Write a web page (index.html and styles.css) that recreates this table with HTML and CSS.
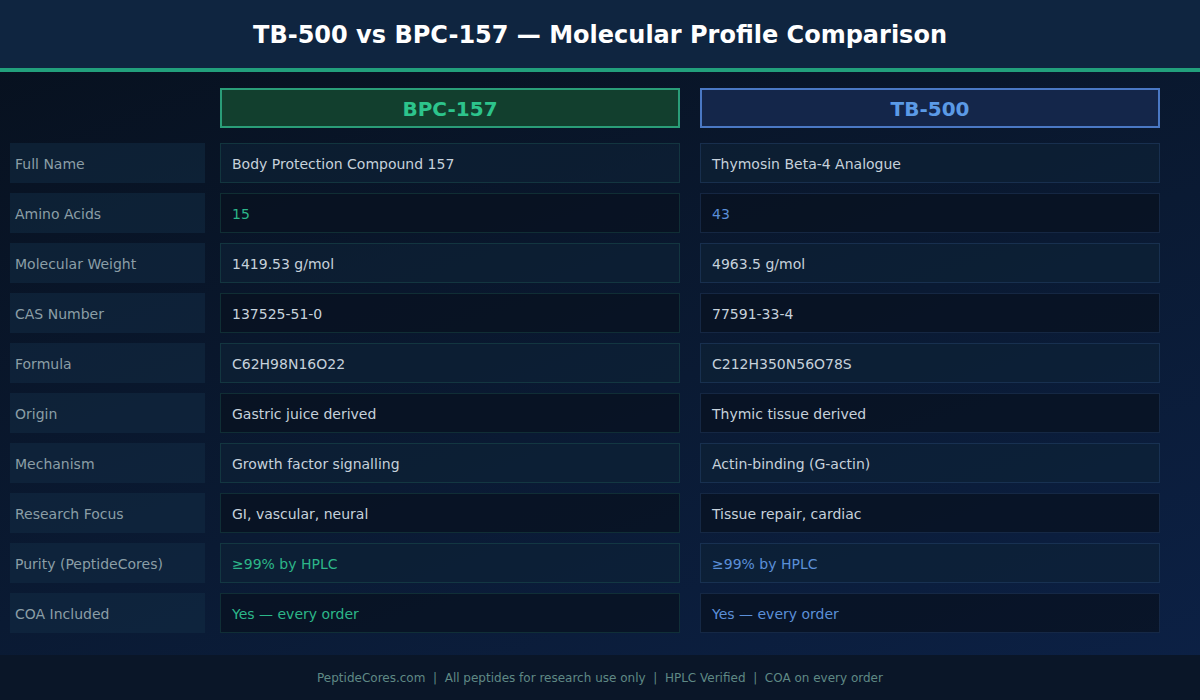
FILE: index.html
```html
<!DOCTYPE html>
<html>
<head>
<meta charset="utf-8">
<link rel="stylesheet" href="styles.css">
</head>
<body>
<div class="page">
  <header class="top">
    <h1 class="title">TB-500 vs BPC-157 — Molecular Profile Comparison</h1>
  </header>
  <div class="accent"></div>
  <main class="main">
    <div class="row head-row">
      <div class="label-spacer"></div>
      <div class="col-head bpc-head">BPC-157</div>
      <div class="col-head tb-head">TB-500</div>
    </div>
    <div class="row alt">
      <div class="label">Full Name</div>
      <div class="cell bpc">Body Protection Compound 157</div>
      <div class="cell tb">Thymosin Beta-4 Analogue</div>
    </div>
    <div class="row">
      <div class="label">Amino Acids</div>
      <div class="cell bpc green">15</div>
      <div class="cell tb blue">43</div>
    </div>
    <div class="row alt">
      <div class="label">Molecular Weight</div>
      <div class="cell bpc">1419.53 g/mol</div>
      <div class="cell tb">4963.5 g/mol</div>
    </div>
    <div class="row">
      <div class="label">CAS Number</div>
      <div class="cell bpc">137525-51-0</div>
      <div class="cell tb">77591-33-4</div>
    </div>
    <div class="row alt">
      <div class="label">Formula</div>
      <div class="cell bpc">C62H98N16O22</div>
      <div class="cell tb">C212H350N56O78S</div>
    </div>
    <div class="row">
      <div class="label">Origin</div>
      <div class="cell bpc">Gastric juice derived</div>
      <div class="cell tb">Thymic tissue derived</div>
    </div>
    <div class="row alt">
      <div class="label">Mechanism</div>
      <div class="cell bpc">Growth factor signalling</div>
      <div class="cell tb">Actin-binding (G-actin)</div>
    </div>
    <div class="row">
      <div class="label">Research Focus</div>
      <div class="cell bpc">GI, vascular, neural</div>
      <div class="cell tb">Tissue repair, cardiac</div>
    </div>
    <div class="row alt">
      <div class="label">Purity (PeptideCores)</div>
      <div class="cell bpc green">≥99% by HPLC</div>
      <div class="cell tb blue">≥99% by HPLC</div>
    </div>
    <div class="row">
      <div class="label">COA Included</div>
      <div class="cell bpc green">Yes — every order</div>
      <div class="cell tb blue">Yes — every order</div>
    </div>
  </main>
  <footer class="foot">PeptideCores.com&nbsp;&nbsp;|&nbsp;&nbsp;All peptides for research use only&nbsp;&nbsp;|&nbsp;&nbsp;HPLC Verified&nbsp;&nbsp;|&nbsp;&nbsp;COA on every order</footer>
</div>
</body>
</html>
```

FILE: styles.css
```css
* { box-sizing: border-box; }
html, body { margin: 0; padding: 0; }
body {
  width: 1200px;
  height: 700px;
  overflow: hidden;
  font-family: "DejaVu Sans", sans-serif;
  background: #08111f;
}
.page {
  width: 1200px;
  height: 700px;
  display: flex;
  flex-direction: column;
  background: linear-gradient(160deg, #07101d 0%, #0a1a33 55%, #0c2146 100%);
}
.top {
  height: 68px;
  background: #0f2540;
  display: flex;
  align-items: center;
  justify-content: center;
  padding-top: 2px;
}
.title {
  margin: 0;
  color: #ffffff;
  font-size: 24px;
  font-weight: bold;
}
.accent {
  height: 4px;
  background: #22a07c;
}
.main {
  flex: 1;
  padding: 16px 0 0 10px;
  display: flex;
  flex-direction: column;
  gap: 10px;
}
.row {
  display: flex;
  height: 40px;
}
.head-row {
  margin-bottom: 5px;
}
.label-spacer {
  width: 195px;
  margin-right: 15px;
}
.label {
  width: 195px;
  margin-right: 15px;
  background: rgba(18, 44, 68, 0.55);
  color: #8b9ea6;
  font-size: 14px;
  display: flex;
  align-items: center;
  padding: 2px 0 0 5px;
}
.col-head {
  width: 460px;
  display: flex;
  align-items: center;
  justify-content: center;
  font-size: 20px;
  font-weight: bold;
  padding-top: 2px;
}
.bpc-head {
  margin-right: 20px;
  background: #123f2e;
  border: 2px solid #2a9d78;
  color: #2dc48c;
}
.tb-head {
  background: #14264a;
  border: 2px solid #4a78c4;
  color: #5b9ae6;
}
.cell {
  width: 460px;
  display: flex;
  align-items: center;
  padding: 2px 0 0 11px;
  font-size: 14px;
  color: #c6d1db;
  background: rgba(8, 17, 32, 0.75);
}
.row.alt .cell {
  background: rgba(14, 34, 54, 0.65);
}
.cell.bpc {
  margin-right: 20px;
  border: 1px solid rgba(40, 120, 100, 0.28);
}
.cell.tb {
  border: 1px solid rgba(60, 100, 160, 0.25);
}
.green { color: #2cb689 !important; }
.blue { color: #5b8fd8 !important; }
.foot {
  height: 45px;
  margin-top: 22px;
  background: #0a1628;
  color: #5f8985;
  font-size: 12px;
  display: flex;
  align-items: center;
  justify-content: center;
}
```
